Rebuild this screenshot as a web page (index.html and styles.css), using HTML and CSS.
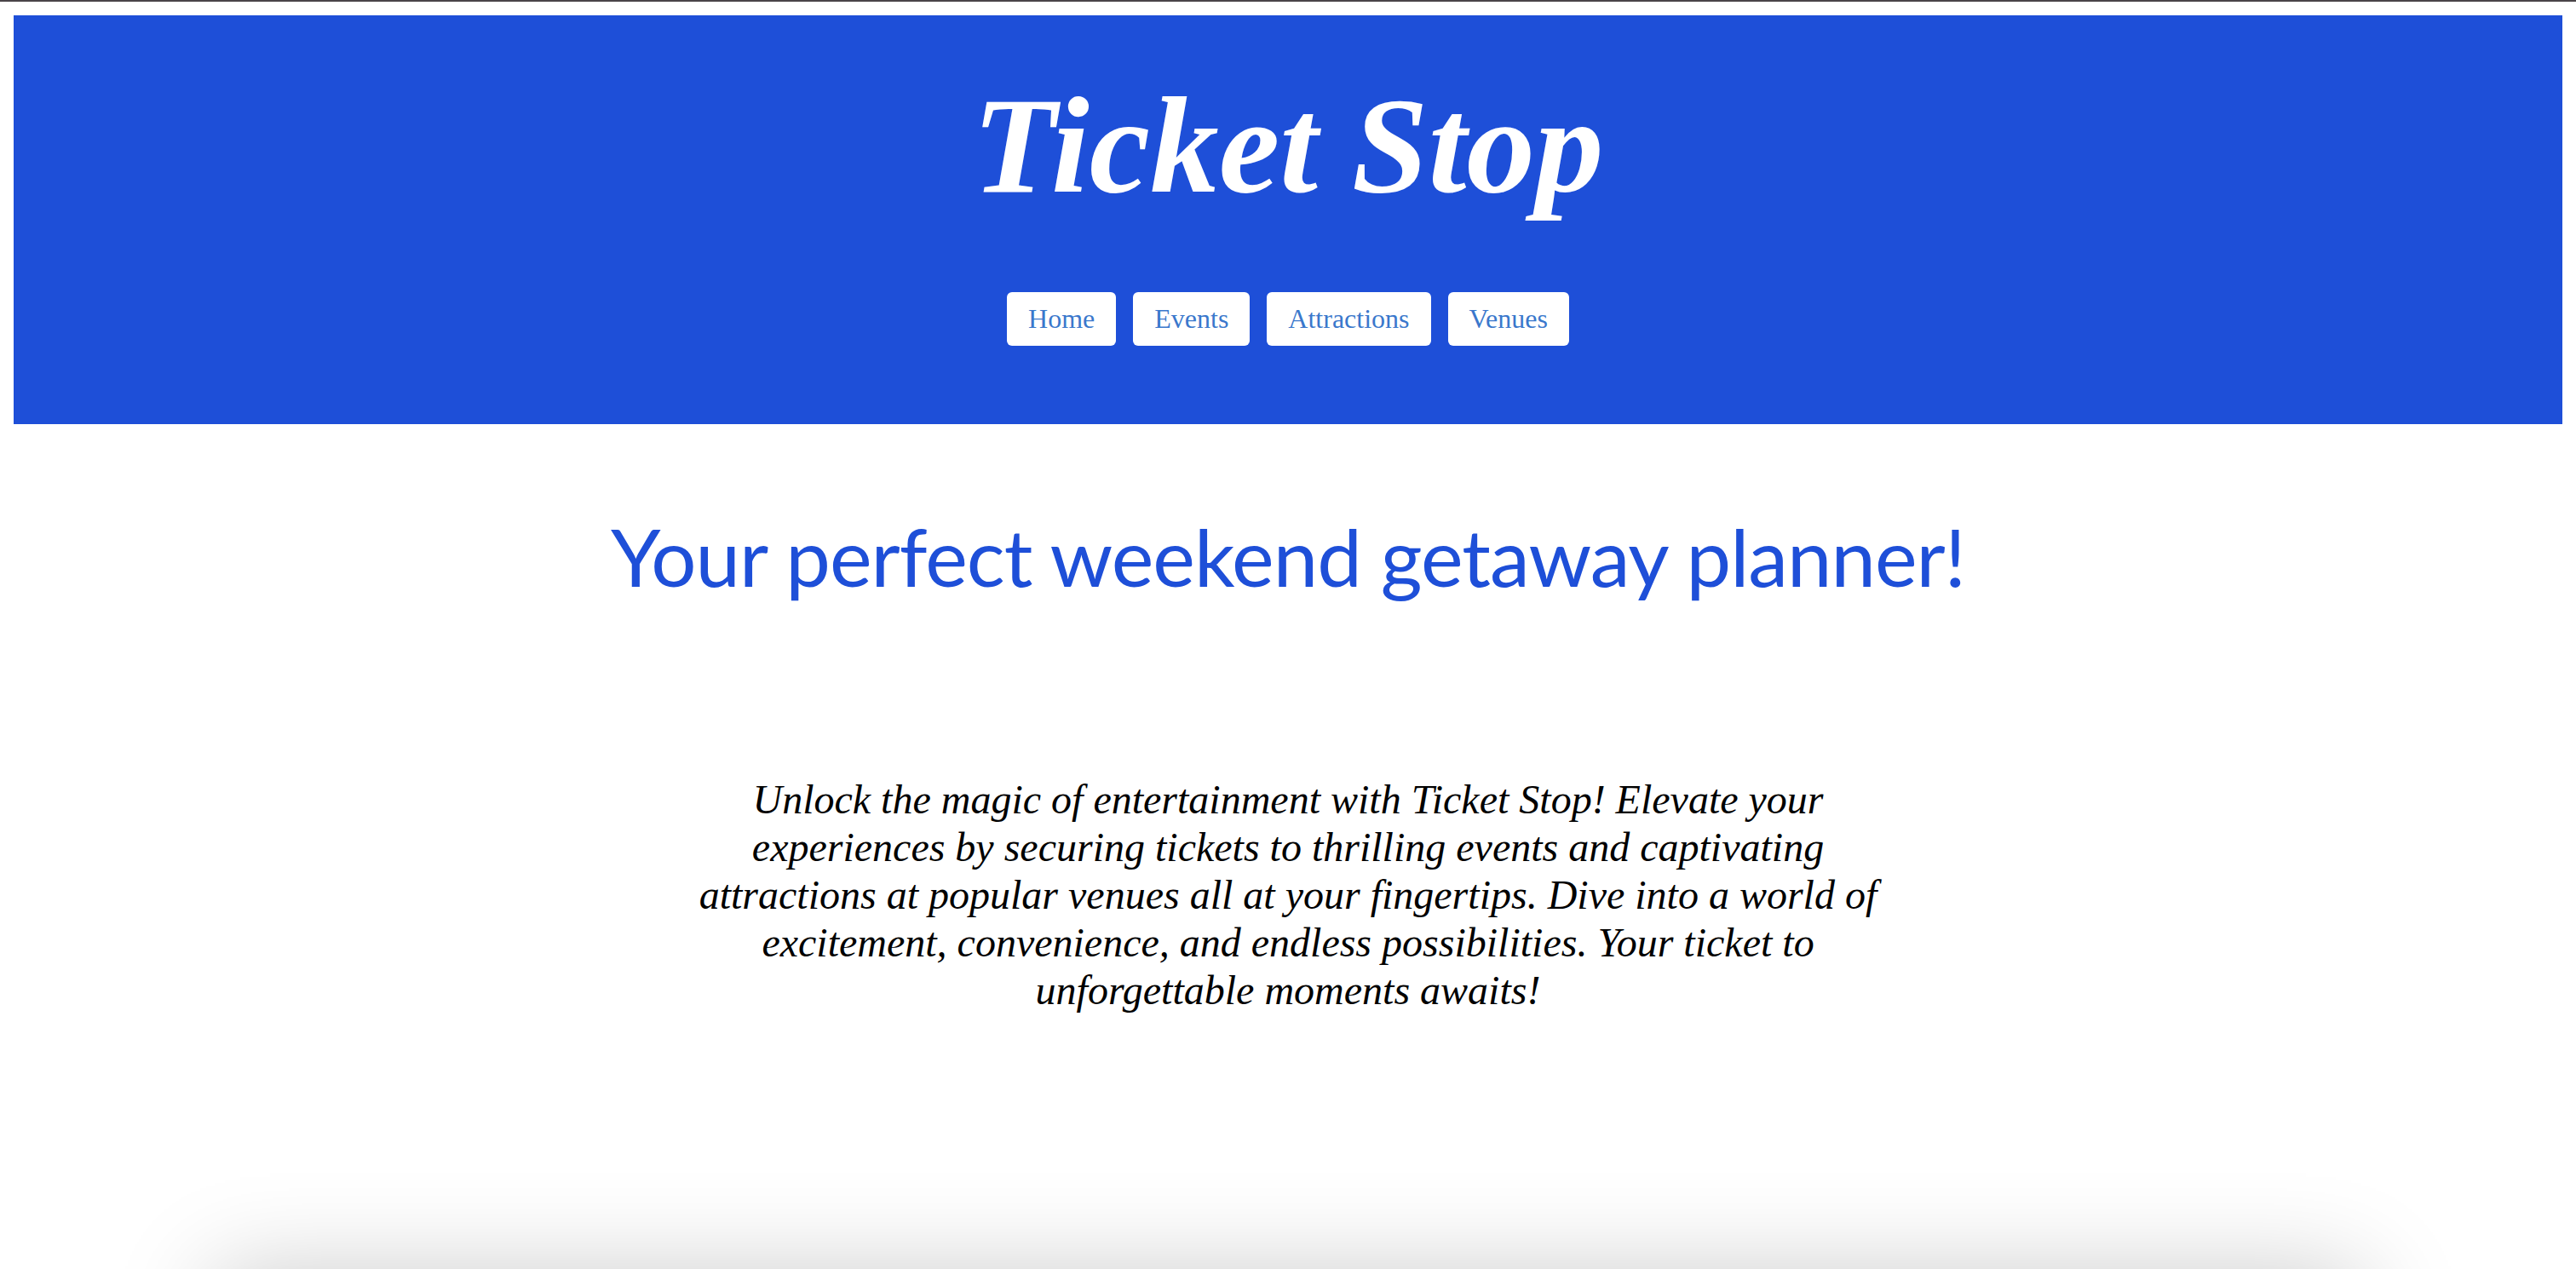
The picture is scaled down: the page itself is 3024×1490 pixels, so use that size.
FILE: index.html
```html
<!DOCTYPE html>
<html lang="en">
<head>
<meta charset="utf-8">
<title>Ticket Stop</title>
<link rel="stylesheet" href="styles.css">
</head>
<body>
<div class="topbar"></div>
<div class="page">
  <header class="site-header">
    <h1 class="brand">Ticket Stop</h1>
    <nav class="nav">
      <a class="nav-btn" href="#">Home</a>
      <a class="nav-btn" href="#">Events</a>
      <a class="nav-btn" href="#">Attractions</a>
      <a class="nav-btn" href="#">Venues</a>
    </nav>
  </header>
  <main class="intro">
    <h2 class="tagline">Your perfect weekend getaway planner!</h2>
    <p class="lead">Unlock the magic of entertainment with Ticket Stop! Elevate your experiences by securing tickets to thrilling events and captivating attractions at popular venues all at your fingertips. Dive into a world of excitement, convenience, and endless possibilities. Your ticket to unforgettable moments awaits!</p>
    <section class="card"></section>
  </main>
</div>
</body>
</html>
```
FILE: styles.css
```css
html, body {
  margin: 0;
  padding: 0;
  background: #ffffff;
  overflow: hidden;
}

.topbar {
  height: 2px;
  background: #4a4448;
}

.page {
  padding: 16px 16px 0;
}

.site-header {
  background: #1e4fd8;
  display: flex;
  flex-direction: column;
  align-items: center;
  padding: 0 0 92px;
}

.brand {
  margin: 61px 0 0;
  font-family: "Liberation Serif", "Times New Roman", serif;
  font-style: italic;
  font-weight: bold;
  font-size: 161px;
  line-height: 184px;
  color: #ffffff;
}

.nav {
  display: flex;
  gap: 20px;
  margin-top: 80px;
}

.nav-btn {
  display: block;
  background: #ffffff;
  border-radius: 6px;
  padding: 13px 25px;
  font-family: "Liberation Serif", "Times New Roman", serif;
  font-size: 32px;
  line-height: 37px;
  color: #3a78cc;
  text-decoration: none;
}

.intro {
  display: flex;
  flex-direction: column;
  align-items: center;
}

.tagline {
  margin: 97px 0 0;
  font-family: Lato, "Open Sans", sans-serif;
  font-weight: normal;
  font-size: 94px;
  letter-spacing: -1px;
  line-height: 115px;
  color: #1e4fd8;
}

.lead {
  margin: 201px 0 0;
  width: 1400px;
  text-align: center;
  font-family: "Liberation Serif", "Times New Roman", serif;
  font-style: italic;
  font-size: 48px;
  line-height: 56px;
  color: #000000;
}

.card {
  margin-top: 306px;
  width: 2520px;
  height: 400px;
  background: #ffffff;
  box-shadow: 0 0 110px rgba(0, 0, 0, 0.22);
}
```
